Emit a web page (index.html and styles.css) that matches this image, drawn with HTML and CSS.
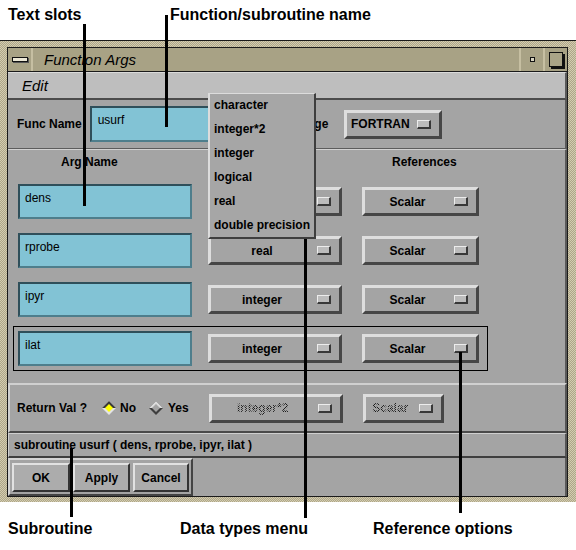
FILE: index.html
```html
<!DOCTYPE html>
<html lang="en">
<head>
  <meta charset="UTF-8" />
  <title>Function Args</title>
  <link rel="stylesheet" href="styles.css">
</head>
<body>
<div class="page">
  <div class="top-notes">
    <span class="note note-slots">Text slots</span>
    <span class="note">Function/subroutine name</span>
  </div>

  <div class="window">
    <div class="win-inner">
      <div class="titlebar">
        <div class="tb-menu"><span class="tb-bar"></span></div>
        <div class="tb-title">Function Args</div>
        <div class="tb-min"><span class="tb-dot"></span></div>
        <div class="tb-max"><span class="tb-square"></span></div>
      </div>

      <div class="menubar"><span class="menu-item">Edit</span></div>

      <div class="name-row">
        <span class="lbl">Func Name</span>
        <div class="field field-name">usurf</div>
        <span class="lbl lang-lbl">Language</span>
        <div class="opt-btn btn-lang"><span class="opt-text">FORTRAN</span><span class="ind"></span></div>
      </div>

      <div class="args">
        <div class="args-head">
          <span class="h-name">Arg Name</span>
          <span class="h-type">Type</span>
          <span class="h-ref">References</span>
        </div>
        <div class="arg-row">
          <div class="field">dens</div>
          <div class="opt-btn btn-type"><span class="opt-text">real</span><span class="ind"></span></div>
          <div class="opt-btn btn-ref"><span class="opt-text">Scalar</span><span class="ind"></span></div>
        </div>
        <div class="arg-row">
          <div class="field">rprobe</div>
          <div class="opt-btn btn-type"><span class="opt-text">real</span><span class="ind"></span></div>
          <div class="opt-btn btn-ref"><span class="opt-text">Scalar</span><span class="ind"></span></div>
        </div>
        <div class="arg-row">
          <div class="field">ipyr</div>
          <div class="opt-btn btn-type"><span class="opt-text">integer</span><span class="ind"></span></div>
          <div class="opt-btn btn-ref"><span class="opt-text">Scalar</span><span class="ind"></span></div>
        </div>
        <div class="arg-row current">
          <div class="field">ilat</div>
          <div class="opt-btn btn-type"><span class="opt-text">integer</span><span class="ind"></span></div>
          <div class="opt-btn btn-ref"><span class="opt-text">Scalar</span><span class="ind"></span></div>
        </div>
      </div>

      <div class="retval">
        <span class="lbl">Return Val ?</span>
        <span class="radio radio-no">
          <svg width="14" height="14" viewBox="0 0 14 14">
            <polygon points="7,0 14,7 7,14 0,7" fill="#e4e4e4"/>
            <polygon points="7,0 14,7 0,7" fill="#3a3a3a"/>
            <polygon points="7,3 11,7 7,11 3,7" fill="#ffff00"/>
          </svg>
          No
        </span>
        <span class="radio radio-yes">
          <svg width="14" height="14" viewBox="0 0 14 14">
            <polygon points="7,0 14,7 7,14 0,7" fill="#3e3e3e"/>
            <polygon points="7,0 14,7 0,7" fill="#dcdcdc"/>
            <polygon points="7,3 11,7 7,11 3,7" fill="#a4a4a4"/>
          </svg>
          Yes
        </span>
        <div class="opt-btn btn-ret disabled"><span class="opt-text">integer*2</span><span class="ind"></span></div>
        <div class="opt-btn btn-retref disabled"><span class="opt-text">Scalar</span><span class="ind"></span></div>
      </div>

      <div class="status">subroutine usurf ( dens, rprobe, ipyr, ilat )</div>

      <div class="actions">
        <div class="btn-group">
          <button class="push push-ok">OK</button>
          <button class="push push-apply">Apply</button>
          <button class="push push-cancel">Cancel</button>
        </div>
      </div>
    </div>
  </div>

  <div class="bottom-notes">
    <span class="note note-sub">Subroutine</span>
    <span class="note note-types">Data types menu</span>
    <span class="note">Reference options</span>
  </div>

  <!-- popped up type menu, drawn over the dialog -->
  <div class="popup-menu">
    <div class="popup-item">character</div>
    <div class="popup-item">integer*2</div>
    <div class="popup-item">integer</div>
    <div class="popup-item">logical</div>
    <div class="popup-item">real</div>
    <div class="popup-item">double precision</div>
  </div>

  <div class="callout c-slots"></div>
  <div class="callout c-name"></div>
  <div class="callout c-types"></div>
  <div class="callout c-refs"></div>
  <div class="callout c-sub"></div>
</div>
</body>
</html>
```

FILE: styles.css
```css
body {
  margin: 0;
  background: #fff;
  font-family: "Liberation Sans", Arial, sans-serif;
  color: #000;
}
.page {
  position: relative;
  width: 576px;
  height: 550px;
  overflow: hidden;
}
.note {
  font-size: 16px;
  font-weight: bold;
  line-height: 18px;
  white-space: nowrap;
}
.top-notes {
  height: 40px;
  box-sizing: border-box;
  padding: 6px 0 0 8px;
  display: flex;
}
.note-slots {
  width: 162px;
}
.bottom-notes {
  height: 48px;
  box-sizing: border-box;
  padding: 18px 0 0 8px;
  display: flex;
}
.note-sub {
  width: 172px;
}
.note-types {
  width: 193px;
}

/* window frame */
.window {
  height: 462px;
  box-sizing: border-box;
  border-top: 1px solid #1a1a1a;
  padding: 6px 8px 5px 7px;
  background: #c3bb9c repeating-conic-gradient(#d3ccb0 0 25%, #aea688 0 50%) 0 0 / 2px 2px;
}
.win-inner {
  height: 100%;
  box-sizing: border-box;
  border: 1px solid #1a1a1a;
  display: flex;
  flex-direction: column;
  background: #a4a4a4;
}
.titlebar {
  height: 24px;
  box-sizing: border-box;
  border-bottom: 1px solid #1a1a1a;
  display: flex;
  background: #a8a285;
}
.tb-menu {
  width: 25px;
  box-sizing: border-box;
  border-right: 2px solid #c6bfa2;
  display: flex;
  align-items: center;
  justify-content: center;
}
.tb-bar {
  width: 14px;
  height: 3px;
  background: #ece8d6;
  border: 1px solid #111;
  box-shadow: 1px 1px 0 #555;
}
.tb-title {
  flex: 1;
  padding-left: 11px;
  font-size: 15px;
  font-style: italic;
  line-height: 23px;
}
.tb-min,
.tb-max {
  box-sizing: border-box;
  border-left: 2px solid #c6bfa2;
  display: flex;
  align-items: center;
  justify-content: center;
}
.tb-min {
  width: 24px;
}
.tb-max {
  width: 24px;
}
.tb-dot {
  width: 3px;
  height: 3px;
  background: #d8d4c0;
  border: 1px solid #111;
}
.tb-square {
  width: 12px;
  height: 13px;
  border: 1px solid #111;
  box-shadow: 2px 2px 0 #111;
  background: #aaa487;
}
.menubar {
  height: 28px;
  box-sizing: border-box;
  background: #bebebe;
  border-top: 1px solid #dadada;
  border-bottom: 2px solid #4c4c4c;
  border-right: 2px solid #5a5a5a;
  padding-left: 14px;
}
.menu-item {
  font-size: 15px;
  font-style: italic;
  line-height: 25px;
}

.lbl {
  font-size: 12px;
  font-weight: bold;
  white-space: nowrap;
}
.field {
  background: #82c3d5;
  border: 2px solid;
  border-color: #2f4f5a #4e7e8c #4e7e8c #2f4f5a;
  box-sizing: border-box;
  height: 35px;
  width: 174px;
  padding: 5px 0 0 5px;
  font-size: 12px;
  line-height: 14px;
}

.name-row {
  height: 49px;
  box-sizing: border-box;
  border-bottom: 1px solid #5c5c5c;
  border-right: 2px solid #5a5a5a;
  display: flex;
  align-items: center;
  padding-left: 9px;
}
.field-name {
  margin-left: 8px;
  width: 170px;
  height: 36px;
  padding-left: 6px;
}
.lang-lbl {
  margin-left: 12px;
}
.btn-lang {
  margin-left: 16px;
  width: 98px;
}

/* option buttons */
.opt-btn {
  height: 29px;
  box-sizing: border-box;
  border: 3px solid;
  border-color: #dedede #464646 #464646 #dedede;
  background: #a4a4a4;
  display: flex;
  align-items: center;
  font-size: 12px;
  font-weight: bold;
}
.opt-text {
  flex: 1;
  text-align: center;
  white-space: nowrap;
}
.ind {
  width: 14px;
  height: 9px;
  box-sizing: border-box;
  background: #bcbcbc;
  border-top: 1px solid #ececec;
  border-left: 1px solid #ececec;
  border-right: 2px solid #383838;
  border-bottom: 2px solid #383838;
  margin: 0 8px 0 4px;
}
.btn-type {
  width: 134px;
  margin-left: 16px;
}
.btn-ref {
  width: 117px;
  margin-left: 20px;
}
.disabled .opt-text {
  color: transparent;
  background: repeating-conic-gradient(#1c1c1c 0 25%, transparent 0 50%) 0 0 / 2px 2px;
  -webkit-background-clip: text;
  background-clip: text;
}

.args {
  height: 234px;
  box-sizing: border-box;
  border-top: 1px solid #d2d2d2;
  border-right: 2px solid #5a5a5a;
  padding-left: 5px;
  display: flex;
  flex-direction: column;
  gap: 4px;
}
.args-head {
  height: 25px;
  display: grid;
  grid-template-columns: 174px 134px 117px;
  column-gap: 16px;
  padding-left: 5px;
  font-size: 12px;
  font-weight: bold;
  line-height: 25px;
}
.h-name {
  padding-left: 43px;
}
.h-type {
  text-align: center;
}
.h-ref {
  margin-left: 4px;
  padding-left: 30px;
}
.arg-row {
  width: 475px;
  height: 45px;
  box-sizing: border-box;
  border: 1px solid transparent;
  padding: 4px;
  display: flex;
  align-items: center;
}
.arg-row.current {
  border-color: #000;
}

.retval {
  height: 50px;
  box-sizing: border-box;
  border: 2px solid;
  border-color: #d0d0d0 #555 #4a4a4a #d0d0d0;
  display: flex;
  align-items: center;
  padding-left: 7px;
}
.radio {
  display: flex;
  align-items: center;
  gap: 4px;
  font-size: 12px;
  font-weight: bold;
}
.radio-no {
  margin-left: 15px;
}
.radio-yes {
  margin-left: 13px;
  gap: 5px;
}
.btn-ret {
  width: 134px;
  margin-left: 20px;
}
.btn-retref {
  width: 81px;
  margin-left: 20px;
}

.status {
  height: 25px;
  box-sizing: border-box;
  border: 1px solid;
  border-color: #cfcfcf #555 #3e3e3e #cfcfcf;
  border-bottom-width: 2px;
  border-right-width: 2px;
  padding-left: 5px;
  font-size: 12px;
  font-weight: bold;
  line-height: 22px;
}

.actions {
  flex: 1;
  display: flex;
  border-right: 2px solid #5a5a5a;
}
.btn-group {
  display: flex;
  gap: 3px;
  padding: 3px 2px 0 2px;
  border: 2px solid;
  border-color: #d4d4d4 #444 #444 #d4d4d4;
}
.push {
  height: 29px;
  box-sizing: border-box;
  border: 2px solid;
  border-color: #e2e2e2 #333 #333 #e2e2e2;
  background: #acacac;
  font-family: "Liberation Sans", Arial, sans-serif;
  font-size: 12px;
  font-weight: bold;
  padding: 0;
  color: #000;
}
.push-ok {
  width: 58px;
}
.push-apply {
  width: 57px;
}
.push-cancel {
  width: 56px;
}

/* type menu popped up over the dialog */
.popup-menu {
  position: absolute;
  left: 208px;
  top: 93px;
  width: 108px;
  height: 146px;
  box-sizing: border-box;
  background: #a6a6a6;
  border: 2px solid;
  border-color: #dcdcdc #3e3e3e #3e3e3e #dcdcdc;
  border-top-width: 1px;
}
.popup-item {
  height: 24px;
  line-height: 22px;
  padding-left: 4px;
  font-size: 12px;
  font-weight: bold;
  white-space: nowrap;
}

.callout {
  position: absolute;
  width: 3px;
  background: #000;
}
.c-slots {
  left: 83px;
  top: 24px;
  height: 182px;
}
.c-name {
  left: 165px;
  top: 15px;
  height: 112px;
}
.c-types {
  left: 304px;
  top: 239px;
  height: 279px;
}
.c-refs {
  left: 459px;
  top: 352px;
  height: 161px;
}
.c-sub {
  left: 70px;
  top: 448px;
  height: 69px;
}
```
